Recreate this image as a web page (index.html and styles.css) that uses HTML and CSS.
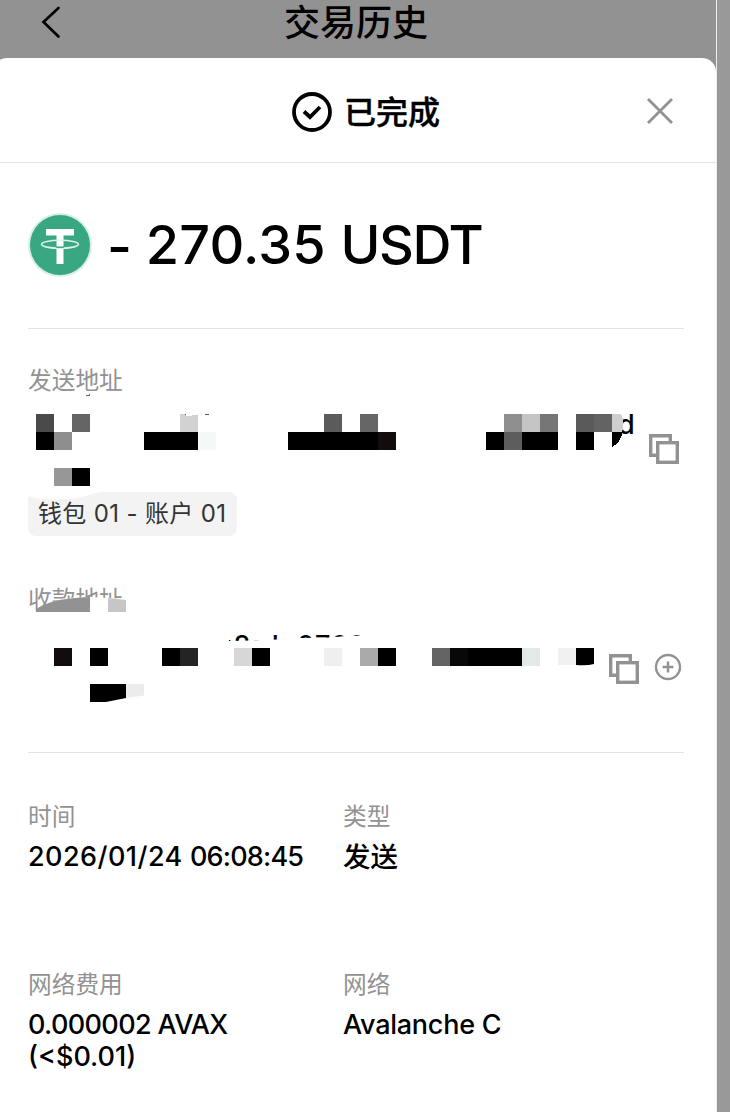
FILE: index.html
```html
<!DOCTYPE html>
<html lang="zh-CN">
<head>
    <meta charset="UTF-8">
    <meta name="viewport" content="width=device-width, initial-scale=1.0">
    <title>交易历史</title>
    <link rel="stylesheet" href="styles.css">
</head>
<body>
    <div class="screen">
        <div class="navbar">
            <svg class="back" width="22" height="36" viewBox="0 0 22 36" fill="none" stroke="#000" stroke-width="2.7" stroke-linecap="round">
                <path d="M18.5 4 L3.5 18 L18.5 32.5"/>
            </svg>
            <h1>交易历史</h1>
        </div>

        <div class="sheet">
            <div class="sheet-header">
                <svg class="done" width="40" height="40" viewBox="0 0 40 40" fill="none" stroke="#000" stroke-width="3.8">
                    <circle cx="20" cy="20" r="18"/>
                    <path d="M12 19.5 L18 25 L28 15"/>
                </svg>
                <h2>已完成</h2>
                <svg class="close" width="26" height="26" viewBox="0 0 26 26" fill="none" stroke="#929292" stroke-width="2.8">
                    <path d="M1 1 L25 25 M25 1 L1 25"/>
                </svg>
            </div>

            <div class="content">
                <div class="amount-row">
                    <svg width="64" height="64" viewBox="0 0 64 64">
                        <circle cx="32" cy="32" r="32" fill="#d8efe7"/>
                        <circle cx="32" cy="32" r="30" fill="#3aa783"/>
                        <path d="M18 16 H46 V22.5 H35.5 V51 H28.5 V22.5 H18 Z" fill="#fff"/>
                        <ellipse cx="32" cy="31.3" rx="18.5" ry="4" fill="none" stroke="#d8f3e9" stroke-width="1.6"/>
                        <path d="M28 34 Q32 34.6 36 34" fill="none" stroke="#3aa783" stroke-width="1.4"/>
                    </svg>
                    <div class="amount"><span class="minus">-</span> 270.35 <span class="unit">USDT</span></div>
                </div>

                <div class="addresses">
                    <div class="label">发送地址</div>
                    <div class="address-row from-row">
                        <svg class="address" width="612" height="98" viewBox="28 394 612 98" shape-rendering="crispEdges">
                            <path d="M84 396 L90 394 V396 Z" fill="#666"/>
                            <text class="hash" x="618" y="433.5">d</text>
                            <path d="M36 414h18v18h-18z" fill="#4a4a4a"/>
                            <path d="M72 414h18v18h-18z" fill="#656565"/>
                            <path d="M180 414h5l1 2 12-1v17h-18z" fill="#d2d2d2"/>
                            <path d="M184 414h2v2zM205 414h4v1h-4z" fill="#555"/>
                            <path d="M324 414h18v18h-18z" fill="#5b5b5b"/>
                            <path d="M360 414h18v18h-18z" fill="#666"/>
                            <path d="M504 414h18v18h-18z" fill="#8f8f8f"/>
                            <path d="M522 414h18v18h-18z" fill="#c5c5c5"/>
                            <path d="M540 414h18v18h-18z" fill="#767676"/>
                            <path d="M576 414h18v18h-18z" fill="#5a5a5a"/>
                            <path d="M594 414h18v18h-18z" fill="#636363"/>
                            <path d="M612 414h9q4 9 1 18h-10z" fill="#cfcfcf"/>
                            <path d="M36 432h18v18h-18zM144 432h54v18h-54zM288 432h90v18h-90zM486 432h18v18h-18zM522 432h36v18h-36zM576 432h18v18h-18zM612 432h11q-3 11-11 15z"/>
                            <path d="M54 432h18v18h-18z" fill="#8e8e8e"/>
                            <path d="M198 432h18v18h-18z" fill="#f4f9f7"/>
                            <path d="M378 432h18v18h-18z" fill="#120c0d"/>
                            <path d="M504 432h18v18h-18z" fill="#5d5d5d"/>
                            <path d="M54 468h18v18h-18z" fill="#959897"/>
                            <path d="M72 468h18v18h-18z"/>
                        </svg>
                        <svg class="copy" width="30" height="30" viewBox="0 0 30 30" fill="none" stroke="#929292" stroke-width="3.4">
                            <path d="M7 21.3 H1.7 V1.7 H21.3 V7"/>
                            <rect x="8.7" y="8.7" width="19.6" height="19.6"/>
                        </svg>
                    </div>
                    <div class="tag">钱包 01 - 账户 01
                        <svg class="tag-edge" width="72" height="8" viewBox="0 0 72 8">
                            <path d="M0 0 H72 Q52 6 38 7 Q16 9 0 4 Z" fill="#fff"/>
                        </svg>
                    </div>

                    <div class="label to-label">收款地址
                        <svg class="smudge" width="104" height="16" viewBox="28 596 104 16">
                            <path d="M34 612 Q50 598 90 597 L108 598 L130 599 V612 Z" fill="#fff"/>
                            <path d="M36 612 V609 Q52 598 90 597 V612 Z" fill="#929292"/>
                            <path d="M108 598 L126 600 V612 H108 Z" fill="#c6c6c6"/>
                        </svg>
                    </div>
                    <div class="address-row to-row">
                        <svg class="address" width="576" height="76" viewBox="28 630 576 76">
                            <clipPath id="tops">
                                <path d="M229 640 L234 632 H364 V635.5 L346 636 L330 637.5 L300 638 L278 639.5 L250 640.5 L229 641 Z"/>
                            </clipPath>
                            <text class="hash" clip-path="url(#tops)" x="221 233.5 249 262 297 315 331 348" y="654.5">f8cd0700</text>
                            <g shape-rendering="crispEdges">
                                <path d="M54 648h18v18h-18z" fill="#120c0d"/>
                                <path d="M90 648h18v18h-18zM162 648h18v18h-18zM252 648h18v18h-18zM378 648h18v18h-18zM468 648h54v18h-54z"/>
                                <path d="M180 648h18v18h-18z" fill="#242424"/>
                                <path d="M234 648h18v18h-18z" fill="#d7d7d7"/>
                                <path d="M324 648h18v18h-18z" fill="#efefef"/>
                                <path d="M360 648h18v18h-18z" fill="#aaa"/>
                                <path d="M432 648h18v18h-18z" fill="#646464"/>
                                <path d="M450 648h18v18h-18z" fill="#080808"/>
                                <path d="M522 648h18v18h-18z" fill="#e4e9e7"/>
                                <path d="M558 648h18v17h-18z" fill="#f0f0f0"/>
                            </g>
                            <path d="M576 648h18v16q-7 2-18 1zM90 684h36v14l-20 4h-16z"/>
                            <path d="M126 684h18v11.5l-18 2.5z" fill="#eeebec"/>
                        </svg>
                        <svg class="copy" width="30" height="30" viewBox="0 0 30 30" fill="none" stroke="#929292" stroke-width="3.4">
                            <path d="M7 21.3 H1.7 V1.7 H21.3 V7"/>
                            <rect x="8.7" y="8.7" width="19.6" height="19.6"/>
                        </svg>
                        <svg class="add" width="28" height="28" viewBox="0 0 28 28" fill="none" stroke="#929292" stroke-width="2.4">
                            <circle cx="14" cy="14" r="12"/>
                            <path d="M14 8.6 V19.4 M8.6 14 H19.4"/>
                        </svg>
                    </div>
                </div>

                <div class="details">
                    <div class="detail">
                        <div class="label">时间</div>
                        <div class="value"><span class="date">2026/01/24</span> <span class="time">06:08:45</span></div>
                    </div>
                    <div class="detail">
                        <div class="label">类型</div>
                        <div class="value type">发送</div>
                    </div>
                    <div class="detail">
                        <div class="label">网络费用</div>
                        <div class="value"><span class="fee">0.000002 AVAX</span><br>(&lt;$0.01)</div>
                    </div>
                    <div class="detail">
                        <div class="label">网络</div>
                        <div class="value network">Avalanche C</div>
                    </div>
                </div>
            </div>
        </div>
    </div>
</body>
</html>
```
FILE: styles.css
```css
* {
    box-sizing: border-box;
}

body {
    margin: 0;
    height: 1112px;
    overflow: hidden;
    background: #999;
    color: #000;
    font-family: Inter, 'Noto Sans CJK SC', sans-serif;
}

.screen {
    width: 717px;
    height: 1112px;
    background: #929292;
    border-right: 1px solid #eee;
    overflow: hidden;
}

svg {
    display: block;
    flex-shrink: 0;
}

h1, h2 {
    margin: 0;
    font-weight: 500;
}

.navbar {
    display: flex;
    height: 58px;
    padding-left: 40px;
}

.back {
    margin-top: 4px;
}

h1 {
    margin-left: 222px;
    font-size: 36px;
    line-height: 46px;
}

.sheet {
    width: 723px;
    height: 1054px;
    margin-left: -7px;
    padding-left: 7px;
    background: #fff;
    border-radius: 14px 14px 0 0;
}

.sheet-header {
    display: flex;
    align-items: center;
    height: 105px;
    padding: 2px 0 0 292px;
    border-bottom: 1px solid #e2e2e2;
}

.done {
    margin-top: 2px;
}

h2 {
    margin: 4px 0 0 12px;
    font-size: 32px;
    line-height: 40px;
    -webkit-text-stroke: 0.4px #000;
}

.close {
    margin-left: 207px;
}

.content {
    padding: 0 32px 0 28px;
}

.amount-row {
    display: flex;
    align-items: center;
    height: 166px;
    padding-bottom: 2px;
    border-bottom: 1px solid #e2e2e2;
}

.amount {
    margin-left: 15px;
    font-size: 54px;
    font-weight: 500;
    letter-spacing: 0.2px;
    white-space: nowrap;
}

.minus {
    position: relative;
    top: 2px;
    letter-spacing: -0.8px;
}

.unit {
    letter-spacing: -1.4px;
}

.addresses {
    height: 424px;
    padding-top: 35px;
    border-bottom: 1px solid #e2e2e2;
}

.label {
    height: 32px;
    font-size: 23.7px;
    line-height: 34px;
    color: #929292;
}

.address-row {
    display: flex;
}

.from-row {
    height: 98px;
    margin-top: -2px;
}

.from-row .copy {
    margin: 40px 0 0 9px;
}

.hash {
    font-size: 27px;
    font-weight: 500;
}

.tag {
    position: relative;
    width: 209px;
    height: 44px;
    padding-left: 10px;
    background: #f3f3f3;
    border-radius: 8px;
    color: #333;
    font-size: 24px;
    line-height: 44px;
    letter-spacing: 0.35px;
    white-space: nowrap;
}

/* the redaction brush also took a bite out of the tag */
.tag-edge {
    position: absolute;
    left: 0;
    top: 0;
}

.to-label {
    position: relative;
    margin-top: 47px;
}

.smudge {
    position: absolute;
    left: 0;
    top: 13px;
}

.to-row {
    height: 76px;
    margin-top: 15px;
}

.to-row .copy {
    margin: 24px 0 0 5px;
}

.add {
    margin: 23px 0 0 15px;
}

.details {
    display: grid;
    grid-template-columns: 315px 1fr;
    grid-auto-rows: 168px;
    padding-top: 47px;
}

.value {
    margin-top: 9px;
    font-size: 27px;
    font-weight: 500;
    line-height: 32px;
    white-space: nowrap;
}

.date {
    letter-spacing: 0.45px;
}

.time {
    letter-spacing: -0.8px;
}

.type {
    font-size: 27.5px;
}

.fee {
    letter-spacing: -0.62px;
}

.network {
    letter-spacing: -0.25px;
}
```
